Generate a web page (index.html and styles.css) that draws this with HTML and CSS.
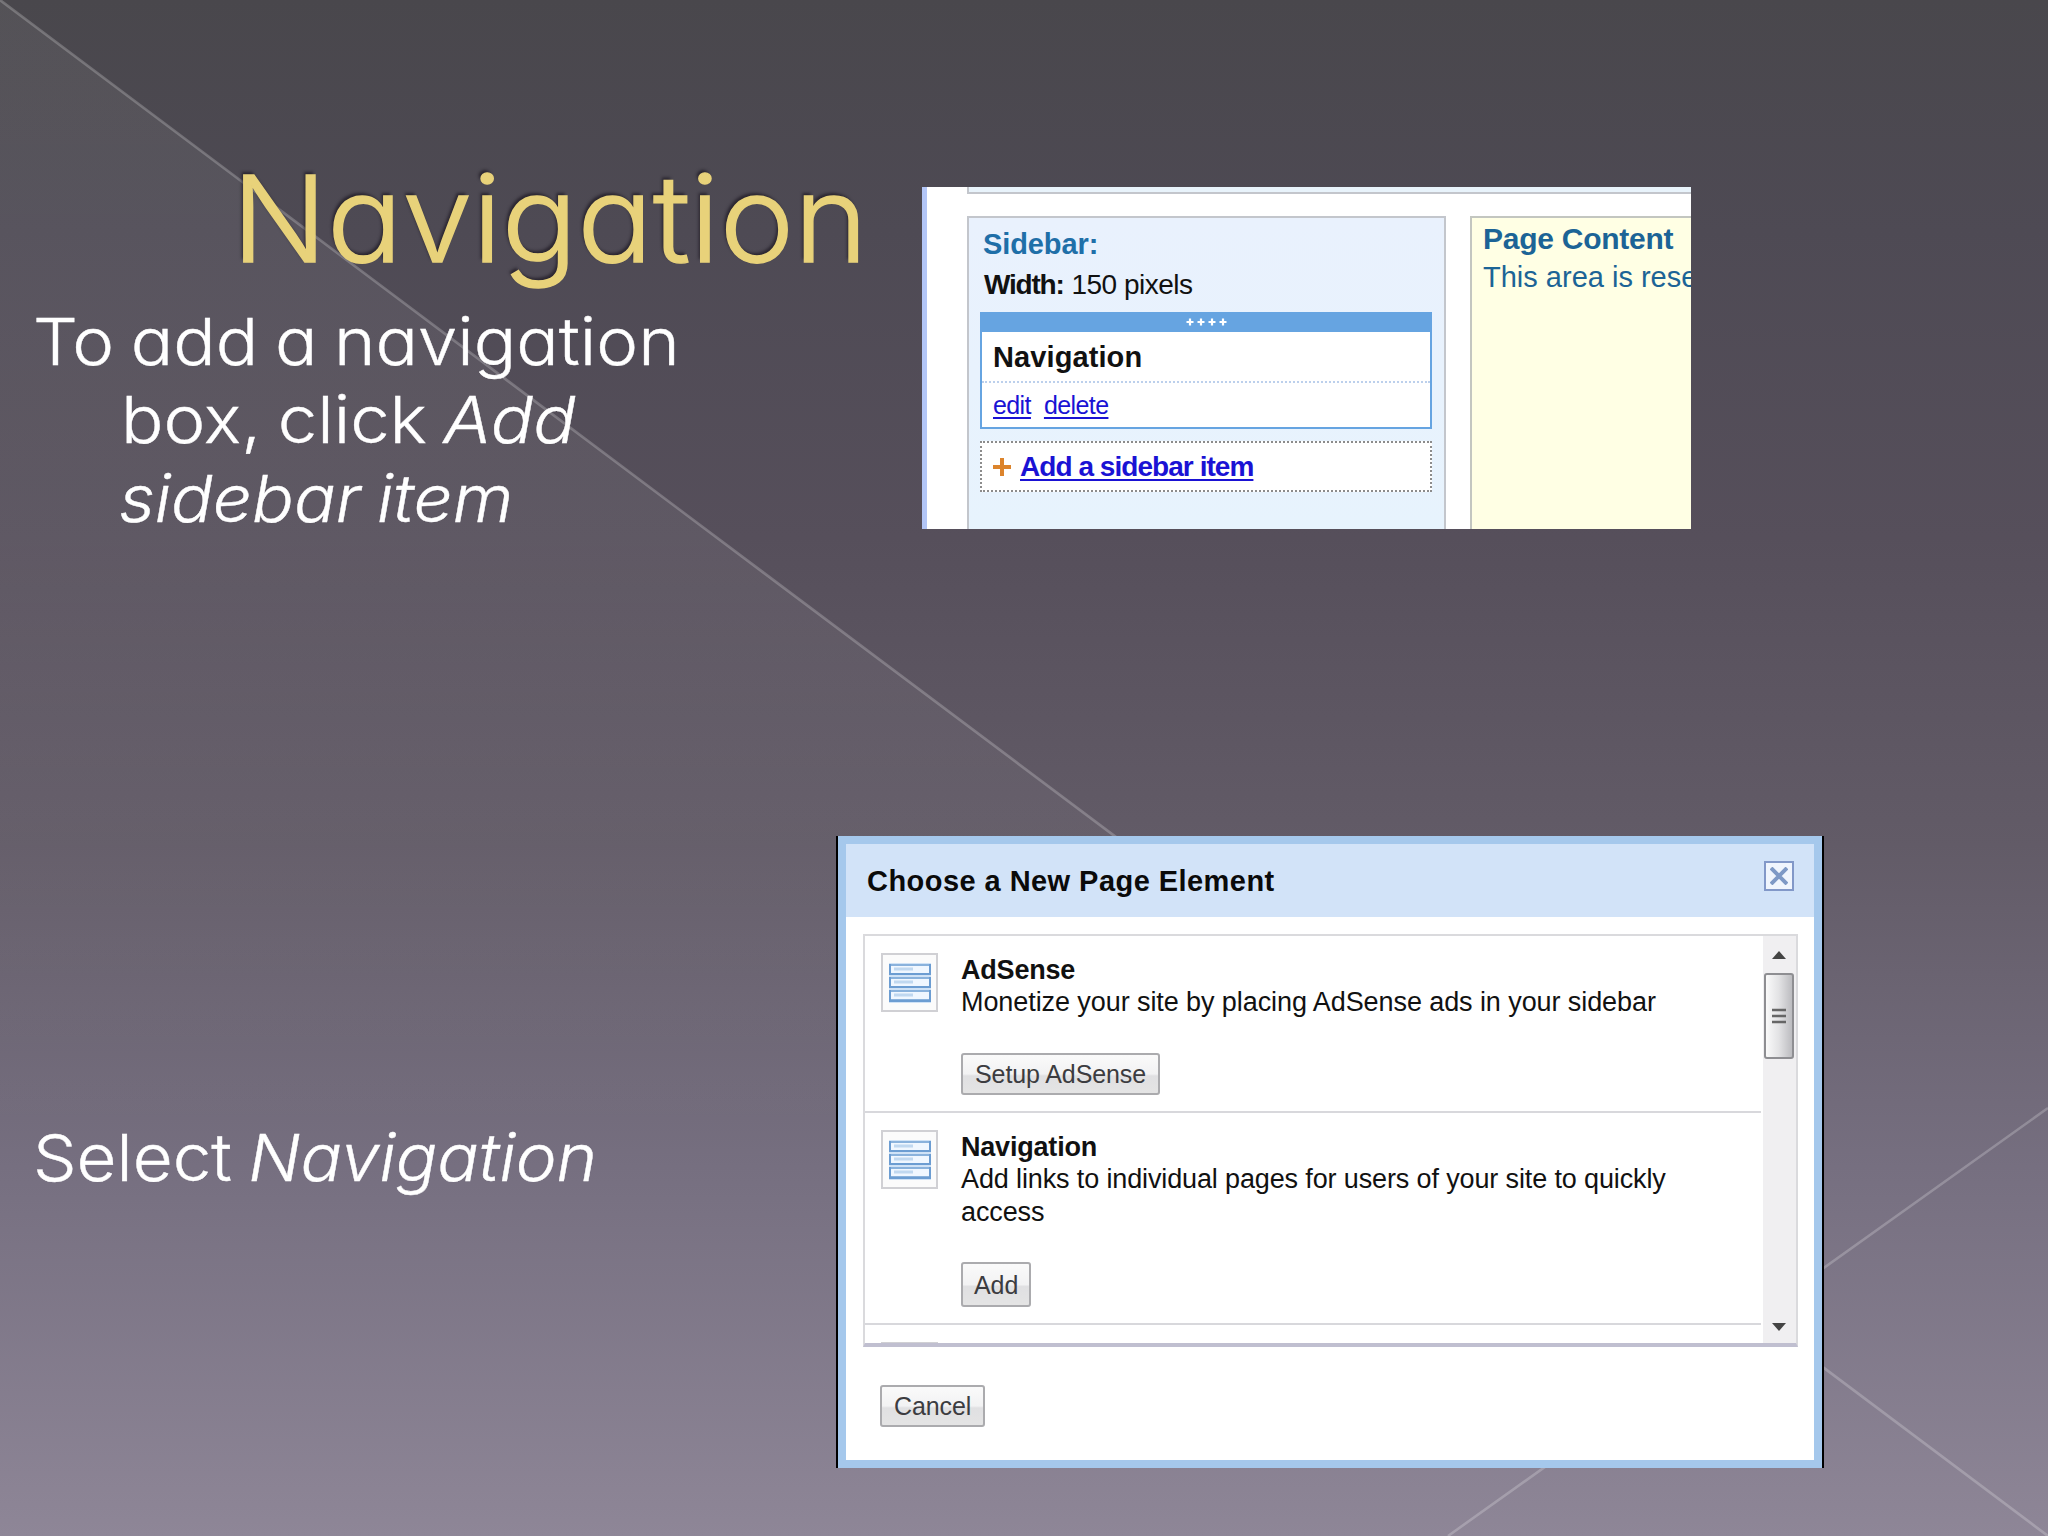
FILE: index.html
```
<!DOCTYPE html>
<html lang="en">

<head>
    <meta charset="UTF-8">
    <title>Navigation</title>
    <link rel="stylesheet" href="styles.css">
</head>

<body>
    <div class="slide">
        <svg class="backdrop" viewBox="0 0 2048 1536">
            <linearGradient id="fade" x1="0" y1="0" x2="0" y2="1">
                <stop offset="0" stop-color="#fff" stop-opacity="0.06" />
                <stop offset="0.35" stop-color="#fff" stop-opacity="0.055" />
                <stop offset="0.75" stop-color="#fff" stop-opacity="0" />
            </linearGradient>
            <polygon fill="url(#fade)" points="0,0 2048,1536 0,1536" />
            <path class="ray" d="M0 0L2048 1536M2048 1108L1448 1536" />
        </svg>

        <section class="row row-top">
            <div class="text">
                <h1>Navigation</h1>
                <p class="step"><span class="l1">To add a navigation</span><br><span class="l2">box, click <i>Add</i></span><br><i class="l3">sidebar item</i></p>
            </div>

            <div class="layout-shot">
                <div class="header-strip"></div>
                <div class="columns">
                    <div class="sidebar">
                        <div class="sidebar-title">Sidebar:</div>
                        <div class="sidebar-width"><b>Width:</b> <span>150 pixels</span></div>
                        <div class="widget">
                            <div class="handle">
                                <svg width="42" height="8" viewBox="0 0 42 8">
                                    <path d="M0.5 4h7M4 0.5v7M11.5 4h7M15 0.5v7M22.5 4h7M26 0.5v7M33.5 4h7M37 0.5v7" stroke="#fff" stroke-width="2.2" />
                                </svg>
                            </div>
                            <div class="widget-name">Navigation</div>
                            <div class="widget-links"><a href="#">edit</a><a href="#">delete</a></div>
                        </div>
                        <div class="add-item">
                            <svg width="18" height="18" viewBox="0 0 18 18">
                                <path d="M0 9h18M9 0v18" stroke="#dc842c" stroke-width="4" />
                            </svg>
                            <a href="#">Add a sidebar item</a>
                        </div>
                    </div>
                    <div class="content">
                        <div class="content-title">Page Content</div>
                        <div class="content-note">This area is rese</div>
                    </div>
                </div>
            </div>
        </section>

        <section class="row">
            <div class="text text-bottom">
                <p class="step"><span class="l4">Select <i>Navigation</i></span></p>
            </div>

            <div class="dialog">
                <div class="dialog-head">
                    <h2>Choose a New Page Element</h2>
                    <div class="close">
                        <svg width="18" height="18" viewBox="0 0 18 18">
                            <path d="M1 1L17 17M17 1L1 17" stroke="#7e99c6" stroke-width="4" />
                        </svg>
                    </div>
                </div>

                <div class="list">
                    <div class="items">
                        <div class="item item-adsense">
                            <div class="thumb">
                                <svg width="42" height="40" viewBox="0 0 42 40">
                                    <use href="#bars" />
                                </svg>
                            </div>
                            <div class="info">
                                <h3>AdSense</h3>
                                <p>Monetize your site by placing AdSense ads in your sidebar</p>
                                <button>Setup AdSense</button>
                            </div>
                        </div>
                        <div class="item item-nav">
                            <div class="thumb">
                                <svg width="42" height="40" viewBox="0 0 42 40">
                                    <g id="bars">
                                        <path d="M0 0h42v40h-42z" fill="#cfe2f6" />
                                        <path d="M1 2h40v9h-40zM1 15h40v9h-40zM1 28h40v9h-40z" fill="#f0f7ff" stroke="#8ab2dc" stroke-width="2" />
                                        <path d="M1 1v10h40v-10M1 14v10h40v-10M1 27v11h40v-11" fill="none" stroke="#6c9dd2" stroke-width="2" />
                                        <path d="M5 6h19M5 19h19M5 32h19" stroke="#c0d8f0" stroke-width="3" />
                                    </g>
                                </svg>
                            </div>
                            <div class="info">
                                <h3>Navigation</h3>
                                <p class="long">Add links to individual pages for users of your site to quickly<br>access</p>
                                <button>Add</button>
                            </div>
                        </div>
                        <div class="item item-next">
                            <div class="thumb"></div>
                        </div>
                    </div>
                    <div class="scrollbar">
                        <svg width="14" height="8" viewBox="0 0 14 8">
                            <path d="M7 0L14 8H0z" fill="#444" />
                        </svg>
                        <div class="grip">
                            <svg width="14" height="16" viewBox="0 0 14 16">
                                <path d="M0 2h14M0 8h14M0 14h14" stroke="#666" stroke-width="2.6" />
                            </svg>
                        </div>
                        <svg class="down" width="14" height="8" viewBox="0 0 14 8">
                            <path d="M0 0h14L7 8z" fill="#444" />
                        </svg>
                    </div>
                </div>

                <button class="cancel">Cancel</button>
            </div>
        </section>
    </div>
</body>

</html>
```
FILE: styles.css
```
* {
    box-sizing: border-box;
}

body {
    margin: 0;
    font-family: "Liberation Sans", Arial, sans-serif;
}

h1, h2, h3, p {
    margin: 0;
}

.slide {
    position: relative;
    width: 2048px;
    height: 1536px;
    overflow: hidden;
    background: linear-gradient(to bottom, #49474c 0%, #4e4a54 15%, #564f5b 35%, #625b67 55%, #766f80 76%, #8e8697 100%);
}

/* diagonal lines behind everything */
.backdrop {
    position: absolute;
    top: 0;
    left: 0;
    width: 2048px;
    height: 1536px;
}

.ray {
    fill: none;
    stroke: rgba(255, 255, 255, 0.22);
    stroke-width: 2.6;
}

.row {
    position: relative;
    display: flex;
}

.row-top {
    height: 836px;
}

.text {
    width: 836px;
    flex: none;
    padding-top: 149px;
    font-family: Inter, "Century Gothic", sans-serif;
    font-feature-settings: "cv11";
    font-weight: 300;
    color: #fff;
    white-space: nowrap;
}

.row-top .text {
    width: 922px;
}

h1 {
    padding-left: 232px;
    margin-bottom: 14px;
    font-size: 120px;
    line-height: 140px;
    font-weight: 300;
    color: #e8d27a;
    -webkit-text-stroke: 1.4px #e8d27a;
    text-shadow: -2px -3px 3px rgba(20, 15, 25, 0.6);
    transform: scaleX(1.046);
    transform-origin: 238px 0;
}

.step {
    padding-left: 121px;
    text-indent: -88px;
    font-size: 65px;
    line-height: 78.4px;
    -webkit-text-stroke: 0.4px #fff;
}

.l1, .l2, .l3, .l4 {
    display: inline-block;
    vertical-align: top;
    text-indent: 0;
    word-spacing: -3px;
    transform-origin: 0 0;
}

.l1, .l2 {
    transform: scaleX(1.086);
}

.l3 {
    margin-left: -2px;
    transform: scaleX(1.067);
}

.l4 {
    transform: scaleX(1.062);
}

.text-bottom {
    padding-top: 283px;
}

/* page layout picture */
.layout-shot {
    width: 769px;
    height: 342px;
    margin-top: 187px;
    padding-left: 40px;
    border-left: 5px solid #b3c6f7;
    background: #fff;
    overflow: hidden;
}

.header-strip {
    height: 7px;
    background: #e8f3fb;
    border-left: 2px solid #c3c6cc;
    border-bottom: 2px solid #c3c6cc;
}

.columns {
    display: flex;
    gap: 24px;
    height: 313px;
    margin-top: 22px;
    white-space: nowrap;
}

.sidebar {
    width: 479px;
    flex: none;
    padding: 10px 12px 0 11px;
    border: 2px solid #c3c6cc;
    border-bottom: none;
    background: linear-gradient(to bottom, #e9f1fd, #e7f3fd);
}

.sidebar-title {
    padding-left: 3px;
    font-size: 29px;
    line-height: 32px;
    font-weight: bold;
    letter-spacing: -0.1px;
    color: #1f6fa8;
}

.sidebar-width {
    margin-top: 7px;
    padding-left: 4px;
    font-size: 28px;
    line-height: 36px;
    color: #111;
}

.sidebar-width b {
    letter-spacing: -1.2px;
}

.sidebar-width span {
    letter-spacing: -0.5px;
}

.widget {
    height: 117px;
    margin-top: 9px;
    border: 2px solid #66a4e1;
    background: #fff;
}

.handle {
    display: flex;
    align-items: center;
    justify-content: center;
    height: 18px;
    padding: 0 0 2px 2px;
    background: #66a4e1;
}

.widget-name {
    height: 51px;
    padding-left: 11px;
    font-size: 29px;
    line-height: 51px;
    font-weight: bold;
    letter-spacing: 0.1px;
    color: #111;
    border-bottom: 2px dotted #bcd0ec;
}

.widget-links {
    display: flex;
    gap: 13px;
    padding-left: 11px;
    font-size: 25px;
    line-height: 44px;
    letter-spacing: -0.6px;
}

a {
    color: #1a12d4;
    text-decoration-thickness: 2px;
    text-underline-offset: 3px;
}

.add-item {
    display: flex;
    align-items: center;
    gap: 9px;
    height: 51px;
    margin-top: 12px;
    padding-left: 11px;
    border: 2px dotted #8c8c8c;
    background: #fff;
    font-size: 28px;
    line-height: 48px;
    font-weight: bold;
    letter-spacing: -0.95px;
}

.content {
    flex: 1;
    padding: 11px 0 0 11px;
    border: 2px solid #c3c6c0;
    border-right: none;
    border-bottom: none;
    background: #ffffe4;
    color: #1c6496;
}

.content-title {
    font-size: 30px;
    font-weight: bold;
    letter-spacing: -0.25px;
    line-height: 20px;
}

.content-note {
    margin-top: 11px;
    font-size: 29px;
    line-height: 34px;
}

/* dialog */
.dialog {
    width: 988px;
    height: 632px;
    border: solid #000;
    border-width: 0 2px;
    padding: 8px;
    background: #fff;
    box-shadow: inset 0 0 0 8px #a5c8ec;
}

.dialog-head {
    display: flex;
    justify-content: space-between;
    height: 73px;
    padding: 17px 20px 0 21px;
    background: #d2e3f8;
}

h2 {
    font-size: 29px;
    line-height: 40px;
    letter-spacing: 0.45px;
    color: #0a0a0a;
}

.close {
    display: flex;
    align-items: center;
    justify-content: center;
    width: 30px;
    height: 30px;
    border: 2px solid #8298c8;
    background: #f0f5fd;
}

.list {
    display: flex;
    width: 935px;
    height: 413px;
    margin: 17px 0 0 17px;
    border: 2px solid #dadadd;
    border-bottom: 4px solid #c0bfd0;
    overflow: hidden;
}

.items {
    width: 896px;
    flex: none;
}

.item {
    display: flex;
    gap: 23px;
    padding: 17px 0 0 16px;
    border-bottom: 2px solid #d8d8dc;
}

.item-adsense {
    height: 177px;
}

.item-nav {
    height: 212px;
}

.thumb {
    display: flex;
    align-items: center;
    justify-content: center;
    width: 57px;
    height: 59px;
    flex: none;
    border: 2px solid #d0d0d4;
    background: #fbfbfb;
}

.info {
    padding-top: 1px;
    color: #111;
    white-space: nowrap;
}

h3 {
    font-size: 27px;
    line-height: 32px;
    letter-spacing: -0.2px;
}

.info p {
    font-size: 27px;
    line-height: 33px;
    letter-spacing: -0.08px;
}

.info .long {
    letter-spacing: -0.13px;
}

button {
    display: block;
    height: 42px;
    padding: 0 12px;
    border: 2px solid #ababae;
    border-radius: 3px;
    background: linear-gradient(to bottom, #fafafa 0%, #f2f2f3 50%, #e0e0e2 55%, #e4e4e4 100%);
    font-family: inherit;
    font-size: 25px;
    line-height: 36px;
    letter-spacing: -0.1px;
    color: #3c3c40;
}

.info button {
    margin-top: 34px;
}

.item-nav button {
    height: 45px;
    padding: 0 11px;
    margin-top: 33px;
}

.scrollbar {
    display: flex;
    flex-direction: column;
    align-items: center;
    width: 34px;
    padding: 15px 2px 12px 1px;
    margin-left: 2px;
    background: #f0eff1;
}

.grip {
    display: flex;
    align-items: center;
    justify-content: center;
    width: 30px;
    height: 86px;
    margin-top: 14px;
    border: 2px solid #8e8e92;
    border-radius: 3px;
    background: linear-gradient(to right, #fafafa, #e2e2e4 50%, #bcbcc0);
}

.down {
    margin-top: auto;
}

.cancel {
    margin: 38px 0 0 34px;
}
```
